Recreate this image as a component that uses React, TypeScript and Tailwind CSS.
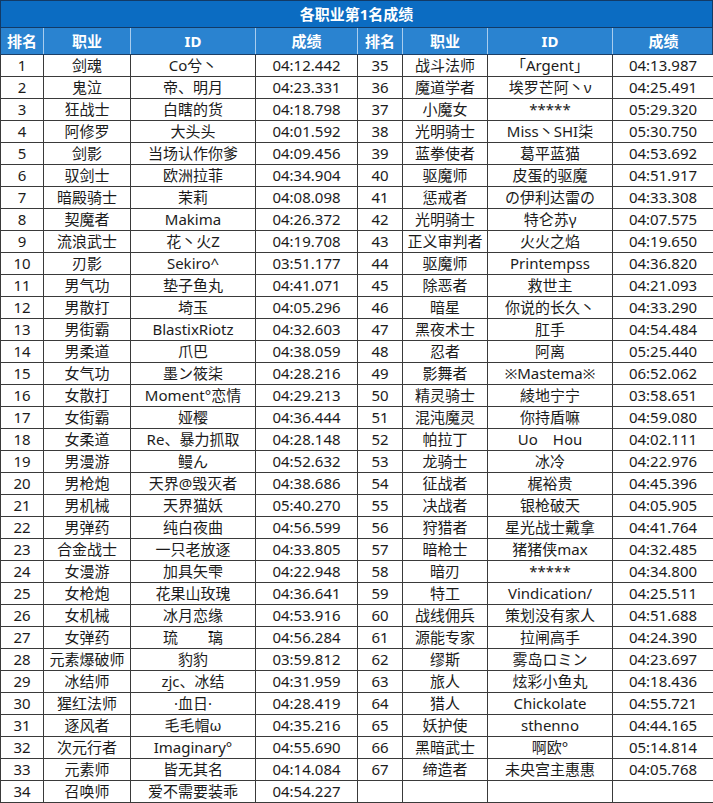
import React from 'react';

const rows: [number, string, string, string][] = [
  [1, '剑魂', 'Co兮丶', '04:12.442'],
  [2, '鬼泣', '帝、明月', '04:23.331'],
  [3, '狂战士', '白瞎的货', '04:18.798'],
  [4, '阿修罗', '大头头', '04:01.592'],
  [5, '剑影', '当场认作你爹', '04:09.456'],
  [6, '驭剑士', '欧洲拉菲', '04:34.904'],
  [7, '暗殿骑士', '茉莉', '04:08.098'],
  [8, '契魔者', 'Makima', '04:26.372'],
  [9, '流浪武士', '花丶火Z', '04:19.708'],
  [10, '刃影', 'Sekiro^', '03:51.177'],
  [11, '男气功', '垫子鱼丸', '04:41.071'],
  [12, '男散打', '埼玉', '04:05.296'],
  [13, '男街霸', 'BlastixRiotz', '04:32.603'],
  [14, '男柔道', '爪巴', '04:38.059'],
  [15, '女气功', '墨ン筱柒', '04:28.216'],
  [16, '女散打', 'Moment°恋情', '04:29.213'],
  [17, '女街霸', '娅樱', '04:36.444'],
  [18, '女柔道', 'Re、暴力抓取', '04:28.148'],
  [19, '男漫游', '鳗ん', '04:52.632'],
  [20, '男枪炮', '天界@毁灭者', '04:38.686'],
  [21, '男机械', '天界猫妖', '05:40.270'],
  [22, '男弹药', '纯白夜曲', '04:56.599'],
  [23, '合金战士', '一只老放逐', '04:33.805'],
  [24, '女漫游', '加具矢雫', '04:22.948'],
  [25, '女枪炮', '花果山玫瑰', '04:36.641'],
  [26, '女机械', '冰月恋缘', '04:53.916'],
  [27, '女弹药', '琉　　璃', '04:56.284'],
  [28, '元素爆破师', '豹豹', '03:59.812'],
  [29, '冰结师', 'zjc、冰结', '04:31.959'],
  [30, '猩红法师', '·血日·', '04:28.419'],
  [31, '逐风者', '毛毛帽ω', '04:35.216'],
  [32, '次元行者', 'Imaginary°', '04:55.690'],
  [33, '元素师', '皆无其名', '04:14.084'],
  [34, '召唤师', '爱不需要装乖', '04:54.227'],
  [35, '战斗法师', '「Argent」', '04:13.987'],
  [36, '魔道学者', '埃罗芒阿丶ν', '04:25.491'],
  [37, '小魔女', '*****', '05:29.320'],
  [38, '光明骑士', 'Miss丶SHI柒', '05:30.750'],
  [39, '蓝拳使者', '葛平蓝猫', '04:53.692'],
  [40, '驱魔师', '皮蛋的驱魔', '04:51.917'],
  [41, '惩戒者', 'の伊利达雷の', '04:33.308'],
  [42, '光明骑士', '特仑苏γ', '04:07.575'],
  [43, '正义审判者', '火火之焰', '04:19.650'],
  [44, '驱魔师', 'Printempss', '04:36.820'],
  [45, '除恶者', '救世主', '04:21.093'],
  [46, '暗星', '你说的长久丶', '04:33.290'],
  [47, '黑夜术士', '肛手', '04:54.484'],
  [48, '忍者', '阿离', '05:25.440'],
  [49, '影舞者', '※Mastema※', '06:52.062'],
  [50, '精灵骑士', '綾地宁宁', '03:58.651'],
  [51, '混沌魔灵', '你持盾嘛', '04:59.080'],
  [52, '帕拉丁', 'Uo　Hou', '04:02.111'],
  [53, '龙骑士', '冰冷', '04:22.976'],
  [54, '征战者', '梶裕贵', '04:45.396'],
  [55, '决战者', '银枪破天', '04:05.905'],
  [56, '狩猎者', '星光战士戴拿', '04:41.764'],
  [57, '暗枪士', '猪猪侠max', '04:32.485'],
  [58, '暗刃', '*****', '04:34.800'],
  [59, '特工', 'Vindication/', '04:25.511'],
  [60, '战线佣兵', '策划没有家人', '04:51.688'],
  [61, '源能专家', '拉闸高手', '04:24.390'],
  [62, '缪斯', '雾岛ロミン', '04:23.697'],
  [63, '旅人', '炫彩小鱼丸', '04:18.436'],
  [64, '猎人', 'Chickolate', '04:55.721'],
  [65, '妖护使', 'sthenno', '04:44.165'],
  [66, '黑暗武士', '啊欧°', '05:14.814'],
  [67, '缔造者', '未央宫主惠惠', '04:05.768'],
];

const cols = 'grid grid-cols-[43px_87px_125px_102px_45px_85px_125px_101px]';
const headers = ['排名', '职业', 'ID', '成绩', '排名', '职业', 'ID', '成绩'];

export default function App() {
  const left = rows.slice(0, 34);
  const right = rows.slice(34);

  return (
    <div className="w-[713px] h-[803px] overflow-hidden bg-white text-[#1b1b1b] text-[15px] leading-none" style={{ fontFamily: "'Noto Sans', 'Noto Sans CJK SC', sans-serif" }}>
      <div className="h-[28px] bg-[#0b6cc2] border border-[#123a66] flex items-center justify-center text-white font-bold">
        各职业第1名成绩
      </div>
      <div className={`${cols} h-[27px] bg-[#2a83d0] border-x border-b border-[#1d3f66]`}>
        {headers.map((h, i) => (
          <div key={i} className={`flex items-center justify-center text-white font-bold ${i < 7 ? 'border-r border-[#a9cdee]' : ''}`}>
            {h}
          </div>
        ))}
      </div>
      {left.map((l, i) => {
        const r = right[i];
        const cells = r ? [...l, ...r] : [...l, '', '', '', ''];
        return (
          <div key={i} className={`${cols} h-[22px] border-l border-[#3a3a3a]`}>
            {cells.map((c, j) => (
              <div key={j} className="flex items-center justify-center border-r border-b border-[#3a3a3a] whitespace-nowrap">
                {c}
              </div>
            ))}
          </div>
        );
      })}
    </div>
  );
}
